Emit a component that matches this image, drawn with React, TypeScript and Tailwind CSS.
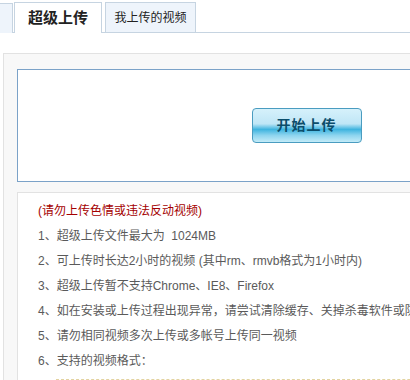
import React from "react";

const notes = [
  "1、超级上传文件最大为\u00a0\u00a01024MB",
  "2、可上传时长达2小时的视频 (其中rm、rmvb格式为1小时内)",
  "3、超级上传暂不支持Chrome、IE8、Firefox",
  "4、如在安装或上传过程出现异常，请尝试清除缓存、关掉杀毒软件或防火墙后重试",
  "5、请勿相同视频多次上传或多帐号上传同一视频",
  "6、支持的视频格式：",
];

export default function App() {
  return (
    <div
      className="w-[410px] h-[380px] overflow-hidden bg-white"
      style={{ fontFamily: '"Liberation Sans", "Noto Sans CJK SC", sans-serif' }}
    >
      <div className="w-[596px]">
        {/* Tabs */}
        <div className="flex items-end h-[33px] border-b border-[#c6d4e1]">
          <div className="w-[13px] h-[30px] bg-[#eef4fb] border-t border-r border-[#c6d4e1] -mb-px" />
          <div className="ml-px w-[88px] h-[31px] bg-white border border-b-0 border-[#c6d4e1] -mb-px flex items-center justify-center text-[15px] font-bold text-[#222]">
            超级上传
          </div>
          <div className="ml-[3px] w-[91px] h-[30px] bg-[#eef4fb] border border-b-0 border-[#c6d4e1] flex items-center justify-center text-[12px] text-[#222]">
            我上传的视频
          </div>
        </div>

        {/* Content */}
        <div className="mt-[20px] ml-[3px] border-t border-l border-[#e2e2e2] bg-[#f8f8f8] pt-[15px] pl-[13px]">
          <div className="h-[113px] border border-[#7ba2c8] bg-white flex items-center justify-center">
            <button className="w-[110px] h-[35px] rounded-[4px] border border-[#4a9cc0] bg-[linear-gradient(to_bottom,#d6f1fb_0%,#bfe6f6_45%,#3fb4df_62%,#8ed5ef_80%,#c3ebf8_100%)] text-[14px] font-bold text-[#0b4d6b] tracking-[1px]">
              开始上传
            </button>
          </div>

          <div className="mt-[10px] border-t border-l border-[#e2e2e2] bg-white pt-[6px] pl-[20px] text-[12px] leading-[25px] text-[#5a5a5a] whitespace-nowrap">
            <div className="text-[#a40000]">(请勿上传色情或违法反动视频)</div>
            {notes.map((n) => (
              <div key={n}>{n}</div>
            ))}
            <div className="ml-[18px] mt-[5px] h-[20px] border-t border-dashed border-[#e3d3a0]" />
          </div>
        </div>
      </div>
    </div>
  );
}
